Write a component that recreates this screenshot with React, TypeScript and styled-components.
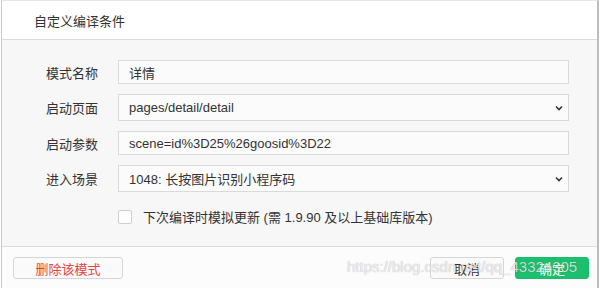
import React, { FC } from 'react';
import styled, { createGlobalStyle } from 'styled-components';

const GlobalStyle = createGlobalStyle`
  html, body {
    margin: 0;
    padding: 0;
    background: #ffffff;
  }
  body {
    font-family: "Liberation Sans", Arial, "Noto Sans CJK SC", sans-serif;
    font-size: 13px;
    color: #333333;
  }
`;

const Page = styled.div`
  position: relative;
  width: 601px;
  height: 288px;
  padding: 0 1px 0 1px;
  box-sizing: border-box;
`;

const Dialog = styled.div`
  display: flex;
  flex-direction: column;
  width: 598px;
  border: 1px solid #c9c9c9;
  border-top-color: #e6e6e6;
  border-right: 2px solid #bdbdbd;
  box-sizing: border-box;
  background: #ffffff;
`;

const Header = styled.div`
  display: flex;
  align-items: center;
  height: 38px;
  padding-left: 32px;
  border-bottom: 1px solid #dcdcdc;
  font-size: 13px;
  color: #333333;
`;

const Body = styled.div`
  display: flex;
  flex-direction: column;
  gap: 10px;
  padding: 20px 28px 20px 44px;
  background: #f7f7f7;
  border-bottom: 1px solid #dedede;
`;

const Row = styled.div`
  display: flex;
  align-items: center;
  gap: 20px;
`;

const Label = styled.div`
  width: 52px;
  flex-shrink: 0;
  font-size: 13px;
  color: #333333;
  white-space: nowrap;
`;

const Field = styled.div<{ $tall?: boolean }>`
  display: flex;
  align-items: center;
  justify-content: space-between;
  flex: 1;
  height: ${(p) => (p.$tall ? 27 : 24)}px;
  padding: 0 5px 0 10px;
  box-sizing: border-box;
  border: 1px solid #dadada;
  background: #fbfbfb;
  font-size: 13px;
  color: #333333;
`;

const Chevron = styled.svg`
  width: 8px;
  height: 6px;
  flex-shrink: 0;
`;

const CheckRow = styled.label`
  display: flex;
  align-items: center;
  gap: 11px;
  margin-top: 5px;
  padding-left: 72px;
  font-size: 13px;
  color: #333333;
`;

const Box = styled.span`
  width: 14px;
  height: 14px;
  box-sizing: border-box;
  border: 1px solid #cfcfcf;
  border-radius: 2px;
  background: #ffffff;
`;

const Footer = styled.div`
  display: flex;
  align-items: center;
  height: 42px;
  padding: 0 8px 0 11px;
  background: #fcfcfc;
`;

const Button = styled.div<{ $kind?: 'danger' | 'primary' | 'default' }>`
  display: flex;
  align-items: center;
  justify-content: center;
  height: 22px;
  box-sizing: border-box;
  border-radius: 3px;
  font-size: 13px;
  user-select: none;
  border: 1px solid
    ${(p) => (p.$kind === 'primary' ? '#19bd6b' : '#d6d6d6')};
  background: ${(p) => (p.$kind === 'primary' ? '#1cbf6d' : '#fafafa')};
  color: ${(p) =>
    p.$kind === 'danger' ? '#e64340' : p.$kind === 'primary' ? '#ffffff' : '#333333'};
`;

const DeleteButton = styled(Button)`
  width: 110px;
`;

const Actions = styled.div`
  display: flex;
  gap: 11px;
  margin-left: auto;
`;

const ActionButton = styled(Button)`
  width: 74px;
`;

// csdn watermark baked into the screenshot
const Watermark = styled.div`
  position: absolute;
  left: 347px;
  top: 258px;
  font-family: "Liberation Sans", Arial, sans-serif;
  font-size: 15px;
  line-height: 18px;
  color: rgba(255, 255, 255, 0.75);
  text-shadow: 0 0 1px rgba(0, 0, 0, 0.35);
  white-space: nowrap;
  pointer-events: none;
`;

const ChevronIcon: FC = () => (
  <Chevron viewBox="0 0 8 6">
    <path d="M1 1.5 L4 4.5 L7 1.5" fill="none" stroke="#333" strokeWidth="1.6" />
  </Chevron>
);

const rows = [
  { label: '模式名称', value: '详情', select: false },
  { label: '启动页面', value: 'pages/detail/detail', select: true },
  { label: '启动参数', value: 'scene=id%3D25%26goosid%3D22', select: false },
  { label: '进入场景', value: '1048: 长按图片识别小程序码', select: true },
];

const App: FC = () => (
  <Page>
    <GlobalStyle />
    <Dialog>
      <Header>{'自定义编译条件'}</Header>
      <Body>
        {rows.map((r) => (
          <Row key={r.label}>
            <Label>{r.label}</Label>
            <Field $tall={r.select}>
              <span>{r.value}</span>
              {r.select && <ChevronIcon />}
            </Field>
          </Row>
        ))}
        <CheckRow>
          <Box />
          <span>{'下次编译时模拟更新 (需 1.9.90 及以上基础库版本)'}</span>
        </CheckRow>
      </Body>
      <Footer>
        <DeleteButton $kind="danger">{'删除该模式'}</DeleteButton>
        <Actions>
          <ActionButton>{'取消'}</ActionButton>
          <ActionButton $kind="primary">{'确定'}</ActionButton>
        </Actions>
      </Footer>
    </Dialog>
    <Watermark>{'https://blog.csdn.net/qq_43324305'}</Watermark>
  </Page>
);

export default App;
